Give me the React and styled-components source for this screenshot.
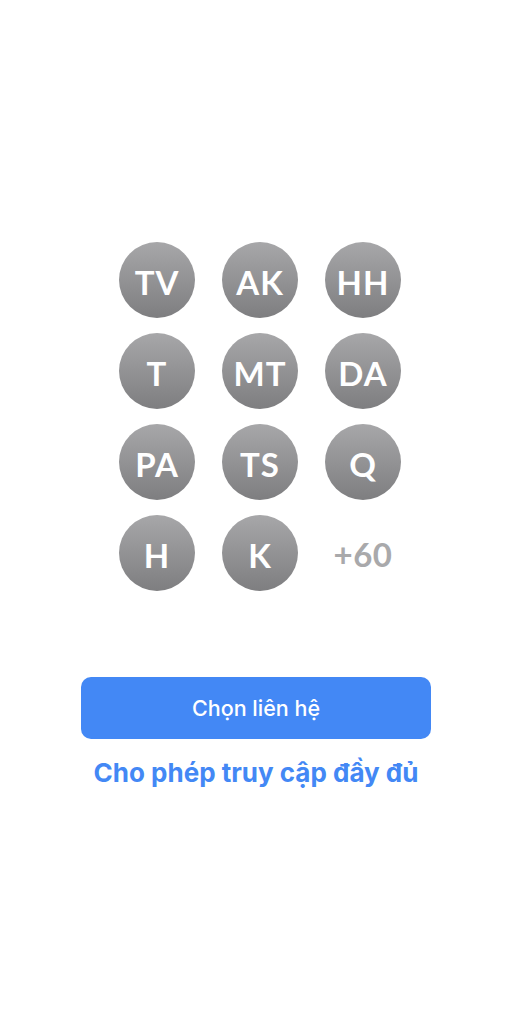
import styled, { createGlobalStyle } from "styled-components";

const GlobalStyle = createGlobalStyle`
  html, body {
    margin: 0;
    padding: 0;
    background: #ffffff;
  }
  body {
    font-family: Inter, "Liberation Sans", sans-serif;
  }
`;

const Page = styled.div`
  width: 512px;
  height: 1033px;
  display: flex;
  flex-direction: column;
  align-items: center;
  box-sizing: border-box;
  padding-top: 242px;
`;

const Grid = styled.div`
  display: grid;
  grid-template-columns: repeat(3, 76px);
  grid-auto-rows: 76px;
  column-gap: 27px;
  row-gap: 15px;
  margin-left: 8px;
`;

const Avatar = styled.div`
  width: 76px;
  height: 76px;
  border-radius: 50%;
  background: linear-gradient(180deg, #a7a7a9 0%, #7e7e80 100%);
  display: flex;
  align-items: center;
  justify-content: center;
  padding-top: 3px;
  box-sizing: border-box;
  color: #ffffff;
  font-family: Lato, "Open Sans", sans-serif;
  font-weight: 700;
  font-size: 33px;
  letter-spacing: 1px;
`;

const More = styled.div`
  width: 76px;
  height: 76px;
  display: flex;
  align-items: center;
  justify-content: center;
  padding-top: 2px;
  box-sizing: border-box;
  color: #a9a9ab;
  font-family: Lato, "Open Sans", sans-serif;
  font-weight: 700;
  font-size: 33px;
  letter-spacing: 0.5px;
`;

const Actions = styled.div`
  margin-top: 86px;
  display: flex;
  flex-direction: column;
  align-items: center;
  gap: 19px;
`;

const Button = styled.button`
  width: 350px;
  height: 62px;
  border: none;
  border-radius: 10px;
  background: #4388f5;
  color: #ffffff;
  font-family: Inter, "Liberation Sans", sans-serif;
  font-weight: 500;
  font-size: 21.5px;
  cursor: pointer;
`;

const Link = styled.a`
  color: #4388f5;
  font-family: Inter, "Liberation Sans", sans-serif;
  font-weight: 700;
  font-size: 26px;
  line-height: 30px;
  text-decoration: none;
  cursor: pointer;
`;

const contacts = ["TV", "AK", "HH", "T", "MT", "DA", "PA", "TS", "Q", "H", "K"];

export default function App() {
  return (
    <>
      <GlobalStyle />
      <Page>
        <Grid>
          {contacts.map((initials) => (
            <Avatar key={initials}>{initials}</Avatar>
          ))}
          <More>+60</More>
        </Grid>
        <Actions>
          <Button>Chọn liên hệ</Button>
          <Link>Cho phép truy cập đầy đủ</Link>
        </Actions>
      </Page>
    </>
  );
}
